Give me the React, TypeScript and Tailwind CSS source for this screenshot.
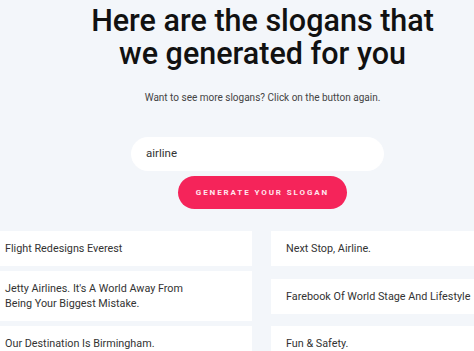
import React from "react";

const left = [
  "Flight Redesigns Everest",
  "Jetty Airlines. It's A World Away From Being Your Biggest Mistake.",
  "Our Destination Is Birmingham.",
];
const right = ["Next Stop, Airline.", "Farebook Of World Stage And Lifestyle", "Fun & Safety."];

const App: React.FC = () => {
  const rows = left.map((l, i) => [l, right[i]]);
  return (
    <div className="w-[474px] h-[351px] overflow-hidden bg-[#f3f6fa] font-['Roboto',sans-serif]">
      <div className="flex flex-col items-center pt-[4px]">
        <h1 className="text-[30.5px] leading-[33px] font-medium text-[#111] text-center ml-[51px]">
          Here are the slogans that
          <br />
          we generated for you
        </h1>
        <p className="mt-[20px] text-[10px] text-[#444] ml-[51px]">
          Want to see more slogans? Click on the button again.
        </p>
        <div className="mt-[32px] ml-[41px] w-[253px] h-[34px] rounded-full bg-white flex items-center px-[15px] text-[11.5px] text-[#333]">
          airline
        </div>
        <button className="mt-[5px] ml-[51px] w-[169px] h-[33px] rounded-full bg-[#f5245a] text-[8px] font-bold tracking-[1.9px] text-[#ffe6ee]">
          GENERATE YOUR SLOGAN
        </button>
      </div>
      <div className="mt-[22px] ml-[-10px] grid grid-cols-[262px_262px] gap-x-[19px] gap-y-[5px] items-center">
        {rows.map(([a, b], i) => (
          <React.Fragment key={i}>
            <div className="bg-white pl-[15px] pr-[50px] py-[10px] text-[10.8px] leading-[15px] text-[#333]">{a}</div>
            <div className="bg-white px-[15px] py-[10px] text-[10.8px] leading-[15px] text-[#333] whitespace-nowrap">{b}</div>
          </React.Fragment>
        ))}
      </div>
    </div>
  );
};

export default App;
